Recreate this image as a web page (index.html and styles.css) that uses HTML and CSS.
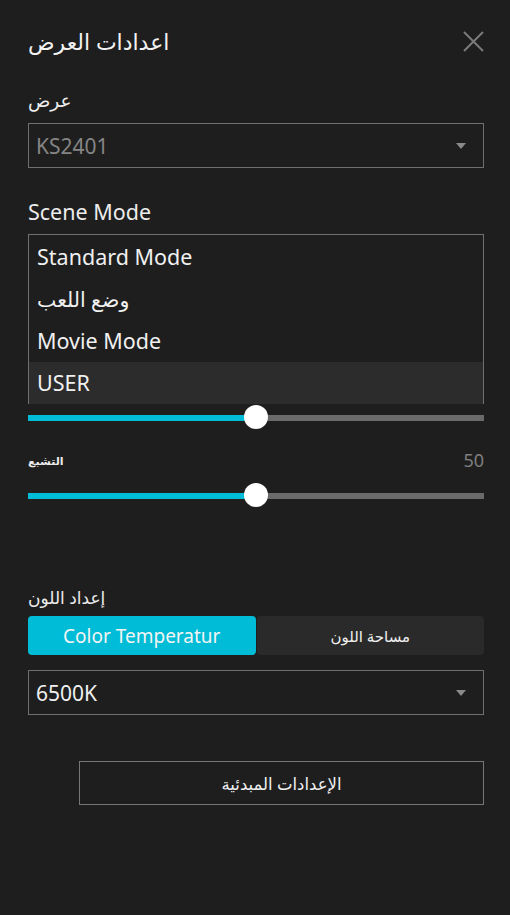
FILE: index.html
```html
<!DOCTYPE html>
<html lang="ar">
<head>
<meta charset="utf-8">
<title>اعدادات العرض</title>
<link rel="stylesheet" href="styles.css">
</head>
<body>
<div class="panel">
  <div class="header">
    <h1 class="title">اعدادات العرض</h1>
    <svg class="close" width="21" height="21" viewBox="0 0 21 21"><path d="M1 1 L20 20 M20 1 L1 20" stroke="#7a7a7a" stroke-width="2" fill="none"/></svg>
  </div>

  <div class="label label-display">عرض</div>
  <div class="select disabled">
    <span>KS2401</span>
    <span class="arrow"></span>
  </div>

  <div class="label label-scene">Scene Mode</div>
  <ul class="list">
    <li>Standard Mode</li>
    <li class="ar">وضع اللعب</li>
    <li>Movie Mode</li>
    <li class="active">USER</li>
  </ul>

  <div class="slider"><div class="fill" style="width:228px"></div><div class="thumb" style="left:216px"></div></div>

  <div class="row-label">
    <span class="small-label">التشبع</span>
    <span class="value">50</span>
  </div>
  <div class="slider"><div class="fill" style="width:228px"></div><div class="thumb" style="left:216px"></div></div>

  <div class="label label-color">إعداد اللون</div>
  <div class="segmented">
    <div class="seg on">Color Temperatur</div>
    <div class="seg off">مساحة اللون</div>
  </div>
  <div class="select light">
    <span>6500K</span>
    <span class="arrow"></span>
  </div>

  <div class="btn-row">
    <button class="btn">الإعدادات المبدئية</button>
  </div>
</div>
</body>
</html>
```

FILE: styles.css
```css
html, body {
  margin: 0;
  padding: 0;
  background: #1e1e1e;
}
body {
  width: 510px;
  height: 915px;
  overflow: hidden;
  font-family: "Noto Sans", "DejaVu Sans", sans-serif;
  color: #ececec;
}
.panel {
  padding: 0 26px 0 28px;
  display: flex;
  flex-direction: column;
}
.header {
  display: flex;
  justify-content: space-between;
  align-items: center;
  margin-top: 26px;
  height: 30px;
}
.title {
  margin: 0;
  font-size: 22px;
  font-weight: 400;
  line-height: 30px;
  color: #f2f2f2;
}
.close {
  display: block;
}
.label {
  font-size: 18.5px;
  line-height: 24px;
  color: #ececec;
}
.label-display { margin-top: 32px; }
.select {
  box-sizing: border-box;
  height: 45px;
  border: 1px solid #6f6f6f;
  display: flex;
  align-items: center;
  justify-content: space-between;
  padding: 0 17px 0 7px;
  font-size: 21px;
}
.label-display + .select { margin-top: 11px; }
.select.disabled { color: #858585; }
.select.light { color: #f0f0f0; margin-top: 15px; }
.arrow {
  width: 0;
  height: 0;
  border-left: 5px solid transparent;
  border-right: 5px solid transparent;
  border-top: 6px solid #8a8a8a;
}
.label-scene {
  margin-top: 32px;
  font-size: 21.5px;
  line-height: 24px;
}
.list {
  list-style: none;
  margin: 10px 0 0;
  padding: 1px 0 0;
  border: 1px solid #707070;
  box-sizing: border-box;
  height: 170px;
}
.list li {
  height: 42px;
  line-height: 42px;
  padding-left: 8px;
  font-size: 21.5px;
  color: #f0f0f0;
}
.list li.ar { font-size: 20.5px; font-weight: 400; }
.list li.active { background: #2c2c2c; }
.slider {
  position: relative;
  height: 24px;
  margin-top: 1px;
}
.slider::before {
  content: "";
  position: absolute;
  left: 0;
  right: 0;
  top: 10px;
  height: 6px;
  background: #6a6a6a;
}
.fill {
  position: absolute;
  left: 0;
  top: 10px;
  height: 6px;
  background: #00bcd6;
}
.thumb {
  position: absolute;
  top: 0;
  width: 24px;
  height: 24px;
  border-radius: 50%;
  background: #ffffff;
}
.row-label {
  display: flex;
  justify-content: space-between;
  align-items: center;
  margin-top: 19px;
  height: 24px;
}
.small-label {
  font-size: 11px;
  font-weight: 700;
  color: #ececec;
}
.value {
  font-size: 18px;
  color: #7f7f7f;
}
.row-label + .slider { margin-top: 11px; }
.label-color {
  margin-top: 79px;
  font-size: 17px;
  line-height: 24px;
}
.segmented {
  display: flex;
  gap: 1px;
  margin-top: 6px;
  height: 39px;
}
.seg {
  flex: 1;
  display: flex;
  align-items: center;
  justify-content: center;
  border-radius: 4px;
  font-size: 19px;
}
.seg.on { background: #00bcd6; color: #f4f4f4; }
.seg.off { background: #2a2a2a; color: #f0f0f0; font-size: 15px; font-weight: 400; }
.btn-row {
  display: flex;
  justify-content: flex-end;
  margin-top: 46px;
}
.btn {
  box-sizing: border-box;
  width: 405px;
  height: 44px;
  background: transparent;
  border: 1px solid #767676;
  color: #f0f0f0;
  font-family: inherit;
  font-size: 16.5px;
  padding: 0;
}
```
